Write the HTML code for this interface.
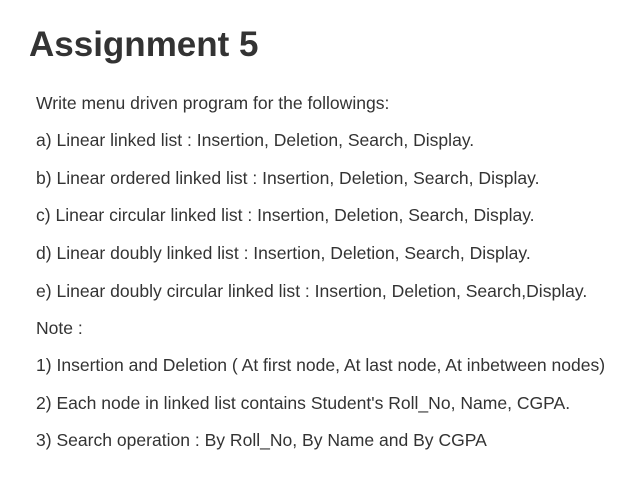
<!DOCTYPE html>
<html><head><meta charset="utf-8"><style>
html,body{margin:0;padding:0;background:#fff;width:628px;height:486px;overflow:hidden}
body{font-family:"Liberation Sans",Arial,sans-serif;color:#333}
h1{position:absolute;left:29px;top:24px;margin:0;font-size:35px;line-height:42px;font-weight:bold;color:#333}
.l{position:absolute;left:36px;font-size:17.55px;line-height:20px;white-space:nowrap;color:#333}
</style></head><body>
<h1>Assignment 5</h1>
<div class="l" style="top:93px">Write menu driven program for the followings:</div>
<div class="l" style="top:130px">a) Linear linked list : Insertion, Deletion, Search, Display.</div>
<div class="l" style="top:168px">b) Linear ordered linked list : Insertion, Deletion, Search, Display.</div>
<div class="l" style="top:205px">c) Linear circular linked list : Insertion, Deletion, Search, Display.</div>
<div class="l" style="top:243px">d) Linear doubly linked list : Insertion, Deletion, Search, Display.</div>
<div class="l" style="top:281px">e) Linear doubly circular linked list : Insertion, Deletion, Search,Display.</div>
<div class="l" style="top:318px">Note :</div>
<div class="l" style="top:355px">1) Insertion and Deletion ( At first node, At last node, At inbetween nodes)</div>
<div class="l" style="top:393px">2) Each node in linked list contains Student's Roll_No, Name, CGPA.</div>
<div class="l" style="top:430px">3) Search operation : By Roll_No, By Name and By CGPA</div>
</body></html>
